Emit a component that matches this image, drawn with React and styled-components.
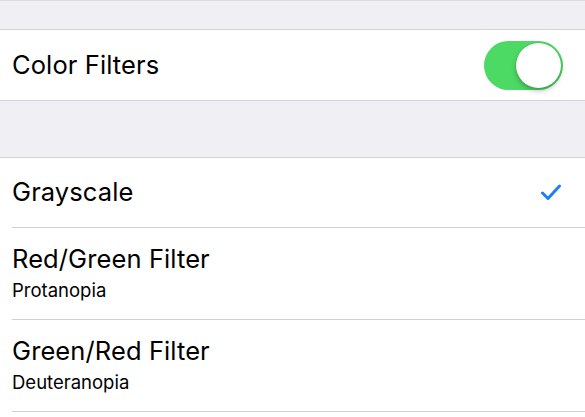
import React, { useState } from 'react'
import styled, { createGlobalStyle } from 'styled-components'

const GlobalStyle = createGlobalStyle`
  html, body {
    margin: 0;
    padding: 0;
    background: #efeff4;
    font-family: Inter, "Liberation Sans", Arial, sans-serif;
    -webkit-font-smoothing: antialiased;
  }
`

const filters = [
  { title: 'Grayscale', checked: true },
  { title: 'Red/Green Filter', sub: 'Protanopia' },
  { title: 'Green/Red Filter', sub: 'Deuteranopia' },
]

function App() {
  const [enabled, setEnabled] = useState(true)
  const [selected, setSelected] = useState(0)

  return (
    <Page>
      <GlobalStyle />
      <Spacer height={29} topLine />
      <Group>
        <Row height={70}>
          <Title>Color Filters</Title>
          <Switch on={enabled} onClick={() => setEnabled(!enabled)}>
            <Knob on={enabled} />
          </Switch>
        </Row>
      </Group>
      <Spacer height={56} />
      <Group fill>
        {filters.map((f, i) => (
          <Row key={i} height={f.sub ? 91 : 69} inset onClick={() => setSelected(i)}>
            <Labels>
              <Title>{f.title}</Title>
              {f.sub && <Sub>{f.sub}</Sub>}
            </Labels>
            {selected === i && (
              <Check viewBox="0 0 20 17">
                <polyline points="1.5,9 7,14.5 18.5,2" />
              </Check>
            )}
          </Row>
        ))}
      </Group>
    </Page>
  )
}

export default App

const Page = styled.div`
  width: 585px;
  height: 417px;
  display: flex;
  flex-direction: column;
  background: #efeff4;
  overflow: hidden;
`

const Spacer = styled.div`
  flex: none;
  height: ${props => props.height}px;
  border-top: ${props => props.topLine ? '1px solid #dcdce0' : 'none'};
  box-sizing: border-box;
`

const Group = styled.div`
  flex: ${props => props.fill ? 1 : 'none'};
  background: #fff;
  border-top: 1px solid #d3d3d8;
  border-bottom: ${props => props.fill ? 'none' : '1px solid #d3d3d8'};
`

const Row = styled.div`
  height: ${props => props.height}px;
  display: flex;
  align-items: center;
  justify-content: space-between;
  padding: 0 22px 0 12px;
  position: relative;
  ${props => props.inset && `
    margin-bottom: 1px;
    &::after {
      content: '';
      position: absolute;
      left: 12px;
      right: 0;
      bottom: -1px;
      height: 1px;
      background: #cfcfd4;
    }
  `}
`

const Labels = styled.div`
  display: flex;
  flex-direction: column;
  gap: 5px;
  margin-top: -2px;
`

const Title = styled.div`
  font-size: 25.5px;
  line-height: 30px;
  color: #000;
  letter-spacing: 0.1px;
`

const Sub = styled.div`
  font-size: 18.5px;
  line-height: 22px;
  color: #000;
`

const Switch = styled.div`
  width: 79px;
  height: 49px;
  border-radius: 25px;
  background: ${props => props.on ? '#4cd964' : '#e5e5ea'};
  position: relative;
  cursor: pointer;
  margin-top: 1px;
`

const Knob = styled.div`
  position: absolute;
  top: 2px;
  left: ${props => props.on ? '32px' : '2px'};
  width: 45px;
  height: 45px;
  border-radius: 50%;
  background: #fff;
  box-shadow: 0 3px 5px rgba(0, 0, 0, 0.25), 0 0 0 0.5px rgba(0, 0, 0, 0.1);
`

const Check = styled.svg`
  width: 20px;
  height: 17px;
  fill: none;
  stroke: #1d7ef5;
  stroke-width: 3;
  stroke-linecap: round;
  stroke-linejoin: round;
  margin-right: 2px;
`
